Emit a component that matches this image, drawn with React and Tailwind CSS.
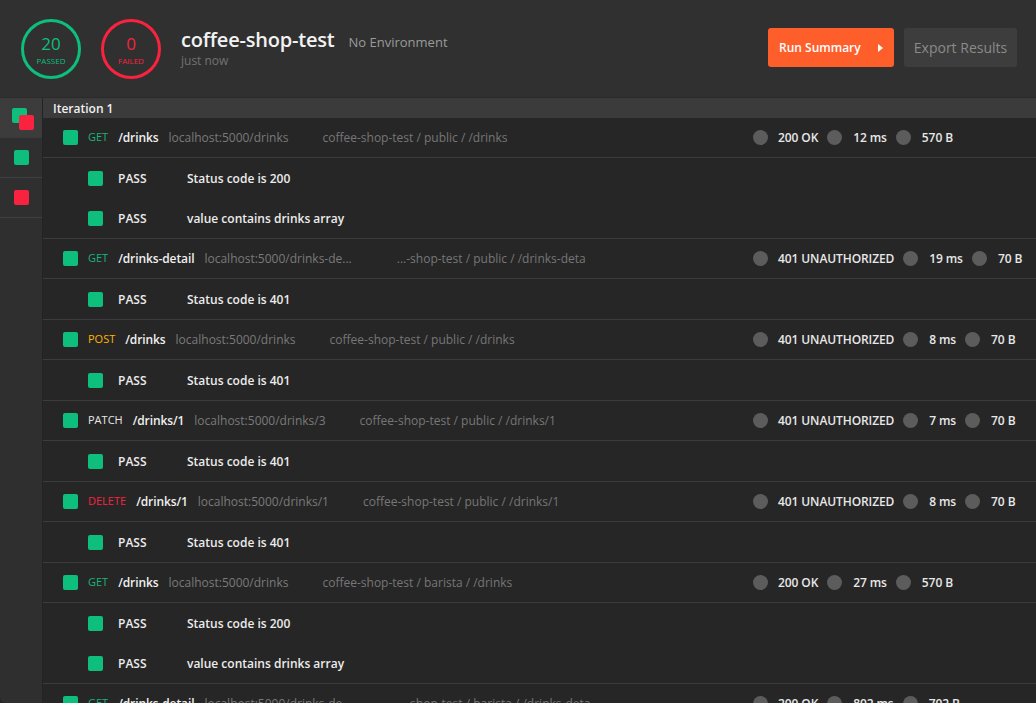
import React from 'react';

// Collection runner results view: summary header, iteration sidebar and the
// list of requests with their test assertions.

const GREEN = 'bg-[#0ebe7d]';
const RED = 'bg-[#f9233f]';

const REQUESTS = [
  {
    method: 'GET', methodClass: 'text-[#17b57a]', path: '/drinks', url: 'localhost:5000/drinks',
    crumb: 'coffee-shop-test / public / /drinks', crumbClass: 'ml-[24px]',
    status: '200 OK', time: '12 ms', size: '570 B',
    tests: ['Status code is 200', 'value contains drinks array'],
  },
  {
    method: 'GET', methodClass: 'text-[#17b57a]', path: '/drinks-detail', url: 'localhost:5000/drinks-de...',
    crumb: '...-shop-test / public / /drinks-deta', crumbClass: 'ml-[35px]',
    status: '401 UNAUTHORIZED', time: '19 ms', size: '70 B',
    tests: ['Status code is 401'],
  },
  {
    method: 'POST', methodClass: 'text-[#ffb400]', path: '/drinks', url: 'localhost:5000/drinks',
    crumb: 'coffee-shop-test / public / /drinks', crumbClass: 'ml-[24px]',
    status: '401 UNAUTHORIZED', time: '8 ms', size: '70 B',
    tests: ['Status code is 401'],
  },
  {
    method: 'PATCH', methodClass: 'text-[#e6e6e6]', path: '/drinks/1', url: 'localhost:5000/drinks/3',
    crumb: 'coffee-shop-test / public / /drinks/1', crumbClass: 'ml-[24px]',
    status: '401 UNAUTHORIZED', time: '7 ms', size: '70 B',
    tests: ['Status code is 401'],
  },
  {
    method: 'DELETE', methodClass: 'text-[#f9233f]', path: '/drinks/1', url: 'localhost:5000/drinks/1',
    crumb: 'coffee-shop-test / public / /drinks/1', crumbClass: 'ml-[24px]',
    status: '401 UNAUTHORIZED', time: '8 ms', size: '70 B',
    tests: ['Status code is 401'],
  },
  {
    method: 'GET', methodClass: 'text-[#17b57a]', path: '/drinks', url: 'localhost:5000/drinks',
    crumb: 'coffee-shop-test / barista / /drinks', crumbClass: 'ml-[24px]',
    status: '200 OK', time: '27 ms', size: '570 B',
    tests: ['Status code is 200', 'value contains drinks array'],
  },
  {
    method: 'GET', methodClass: 'text-[#17b57a]', path: '/drinks-detail', url: 'localhost:5000/drinks-de...',
    crumb: '...-shop-test / barista / /drinks-deta', crumbClass: 'ml-[35px]',
    status: '200 OK', time: '802 ms', size: '702 B',
    tests: ['Status code is 200'],
  },
];

function Square({ color, className = '' }) {
  return <span className={`block w-[15px] h-[15px] rounded-[2px] shrink-0 ${color} ${className}`} />;
}

function Dot() {
  return <span className="block w-[15px] h-[15px] rounded-full bg-[#5c5c5c] shrink-0" />;
}

function CountCircle({ value, label, tone }) {
  const ring = tone === 'pass' ? 'border-[#0ebe7d] text-[#0ebe7d]' : 'border-[#f9233f] text-[#f9233f]';
  return (
    <div className={`w-[60px] h-[60px] rounded-full border-[3px] flex flex-col items-center justify-center ${ring}`}>
      <div className="text-[17px] leading-[20px] mt-[2px]">{value}</div>
      <div className="text-[8px] leading-[10px] uppercase mt-[2px]">{label}</div>
    </div>
  );
}

function Header() {
  return (
    <div className="h-[98px] shrink-0 bg-[#303030] border-b border-[#2a2a2a] flex items-center pl-[21px] pr-[19px]">
      <CountCircle value="20" label="Passed" tone="pass" />
      <div className="ml-[20px]">
        <CountCircle value="0" label="Failed" tone="fail" />
      </div>
      <div className="ml-[20px] -mt-[2px]">
        <div className="flex items-baseline">
          <span className="text-[20px] leading-[26px] font-semibold text-[#f2f2f2] tracking-[-0.2px]">coffee-shop-test</span>
          <span className="ml-[14px] text-[13px] text-[#9b9b9b]">No Environment</span>
        </div>
        <div className="text-[12px] leading-[16px] text-[#727272]">just now</div>
      </div>
      <div className="ml-auto flex items-center gap-[10px] -mt-[2px]">
        <button className="h-[39px] w-[126px] rounded-[3px] bg-[#fe5e2a] text-white text-[12px] font-semibold flex items-center pl-[11px]">
          Run Summary
          <svg width="5" height="8" viewBox="0 0 5 8" className="ml-[17px]">
            <path d="M0 0 L5 4 L0 8 Z" fill="#ffffff" />
          </svg>
        </button>
        <button className="h-[39px] w-[113px] rounded-[3px] bg-[#3d3d3d] text-[#8a8a8a] text-[14px]">
          Export Results
        </button>
      </div>
    </div>
  );
}

function Sidebar() {
  return (
    <div className="w-[43px] shrink-0 bg-[#2f2f2f] border-r border-[#232323] flex flex-col rounded-bl-[6px]">
      <div className="h-[40px] bg-[#3c3c3c] border-b border-[#3a3a3a] relative">
        <Square color={GREEN} className="absolute left-[12px] top-[10px]" />
        <Square color={RED} className="absolute left-[19px] top-[17px]" />
      </div>
      <div className="h-[40px] border-b border-[#404040] flex items-center justify-center">
        <Square color={GREEN} />
      </div>
      <div className="h-[40px] border-b border-[#404040] flex items-center justify-center">
        <Square color={RED} />
      </div>
    </div>
  );
}

function RequestGroup({ req }) {
  return (
    <div className="border-b border-[#3c3c3c]">
      <div className="h-[40px] border-b border-[#3c3c3c] flex items-center pl-[20px]">
        <div className="flex-1 min-w-0 flex items-center gap-[10px] whitespace-nowrap overflow-hidden">
          <Square color={GREEN} />
          <span className={`text-[11px] ${req.methodClass}`}>{req.method}</span>
          <span className="text-[12px] font-semibold text-[#f0f0f0] tracking-[-0.1px]">{req.path}</span>
          <span className="text-[12px] text-[#7a7a7a]">{req.url}</span>
          <span className={`text-[12px] text-[#767676] ${req.crumbClass}`}>{req.crumb}</span>
        </div>
        <div className="w-[283px] shrink-0 flex items-center whitespace-nowrap text-[12px] font-semibold text-[#e8e8e8] tracking-[-0.1px]">
          <Dot />
          <span className="ml-[10px] mr-[9px]">{req.status}</span>
          <Dot />
          <span className="ml-[11px] mr-[9px]">{req.time}</span>
          <Dot />
          <span className="ml-[11px]">{req.size}</span>
        </div>
      </div>
      {req.tests.map((t, i) => (
        <div key={i} className="h-[40px] flex items-center pl-[45px] pt-[1px] whitespace-nowrap">
          <Square color={GREEN} />
          <span className="ml-[15px] w-[69px] text-[12px] font-semibold text-[#ececec]">PASS</span>
          <span className="text-[12px] font-semibold text-[#ececec]">{t}</span>
        </div>
      ))}
    </div>
  );
}

export default function App() {
  return (
    <div
      className="w-[1036px] h-[703px] overflow-hidden bg-[#262626] flex flex-col"
      style={{ fontFamily: '"Open Sans", "Noto Sans", sans-serif' }}
    >
      <Header />
      <div className="flex flex-1 min-h-0">
        <Sidebar />
        <div className="flex-1 min-w-0 overflow-hidden">
          <div className="h-[20px] bg-[#3b3b3b] flex items-center pl-[10px] pt-[2px] text-[12px] font-semibold text-[#f0f0f0]">
            Iteration 1
          </div>
          {REQUESTS.map((r, i) => (
            <RequestGroup key={i} req={r} />
          ))}
        </div>
      </div>
    </div>
  );
}
